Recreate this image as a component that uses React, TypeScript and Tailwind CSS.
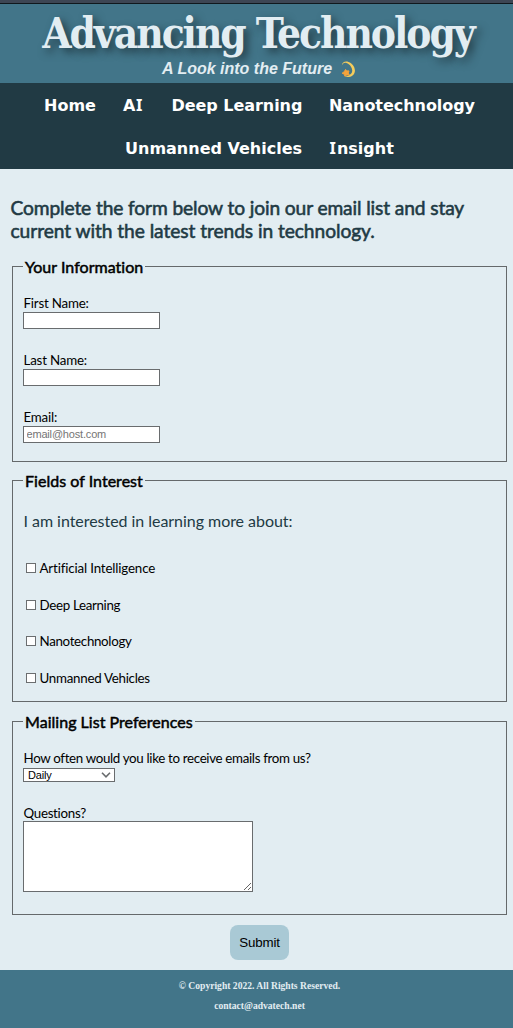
import React from "react";

function TextField({ label, id, placeholder }: { label: string; id: string; placeholder?: string }) {
  return (
    <div className="flex h-[57px] flex-col items-start">
      <label htmlFor={id} className="h-[17px] pl-[0.5px] text-[13.33px] leading-4 tracking-[-0.2px] whitespace-nowrap">{label}</label>
      <input
        id={id}
        placeholder={placeholder}
        className="h-[17px] w-[137px] border border-[#696c6e] bg-white px-[2.5px] pb-[2px] font-['Liberation_Sans',sans-serif] text-[11px] leading-[13px] tracking-[-0.18px] placeholder:text-[#757575]"
      />
    </div>
  );
}

function Interest({ label, tracking }: { label: string; tracking: string }) {
  return (
    <label className="flex h-[36.7px] items-start text-[13.33px] leading-4">
      <input type="checkbox" className="mt-[3px] mr-[3.5px] ml-[3px] h-[10px] w-[10px] appearance-none border border-[#6b6e70] bg-white" />
      <span className={`whitespace-nowrap ${tracking}`}>{label}</span>
    </label>
  );
}

function Legend({ children }: { children: string }) {
  return (
    <legend className="h-[19px] px-[2px] text-[16px] leading-[20px] font-normal tracking-[0.03px] whitespace-nowrap [-webkit-text-stroke:0.5px_black] [font-variant-ligatures:none]">
      {children}
    </legend>
  );
}

function SerifI() {
  return <span className="mr-[1px] ml-[0.5px] font-['Noto_Sans',sans-serif] text-[16.4px] leading-none">I</span>;
}

export default function App() {
  return (
    <div className="flex h-[1028px] w-[513px] flex-col bg-[#e2edf2] font-['Lato',sans-serif] text-black">
      <div className="h-[4px] shrink-0 border-b border-[#10181d] bg-[#3d4654]" />
      <header className="flex h-[79px] shrink-0 flex-col items-center bg-[#427589] text-[#e2edf2]">
        <h1 className="h-[55px] pl-[3px] font-['DejaVu_Serif_Condensed','DejaVu_Serif',serif] text-[42px] leading-[60px] font-bold tracking-[-2.05px] whitespace-nowrap [text-shadow:4px_4px_8px_#213a44]">
          Advancing Technology
        </h1>
        <p className="ml-[5px] flex h-5 items-center gap-[9px] font-['Liberation_Sans',sans-serif] text-[16px] leading-5 font-bold whitespace-nowrap italic">
          A Look into the Future
          <svg width="15" height="17" viewBox="0 0 15 17" fill="none">
            <path d="M.8 4.500C1.200 1.200 4-.2 7.500.9c3.800 1.200 6.800 5.400 6.400 9.300-.5 4.500-5.200 6.900-10.400 5.300 4.200-.2 7.400-2.100 7.700-5.400.3-3.300-2.300-7-5.700-8.200C3.200 1.200 1.700 2.400.8 4.500Z" fill="#f4cc5c" />
            <path d="m4.600 8.400 1 1.500 2.400 0-.7 2 1 2.200-2.400-.2-2 1.300-.6-2L1.100 12.200l2-1.300Z" fill="#f5a33b" stroke="#f5a33b" strokeWidth="1" strokeLinejoin="round" />
          </svg>
        </p>
      </header>
      <nav className="flex h-[86px] shrink-0 flex-col bg-[#213a44] font-['DejaVu_Sans',sans-serif] text-[16px] font-bold text-white">
        <div className="ml-[44px] flex h-[43px] items-baseline pt-[11px] leading-6 whitespace-nowrap">
          <a className="w-[79px]">Home</a>
          <a className="w-[48.5px]">A<SerifI /></a>
          <a className="w-[157.5px] tracking-[-0.05px]">Deep Learning</a>
          <a className="tracking-[-0.05px]">Nanotechnology</a>
        </div>
        <div className="ml-[125px] flex h-[43px] items-baseline pt-[11px] leading-6 whitespace-nowrap">
          <a className="w-[204px]">Unmanned Vehicles</a>
          <a><SerifI />nsight</a>
        </div>
      </nav>
      <main className="flex h-[801px] shrink-0 flex-col">
        <h2 className="mt-[27px] ml-[10.5px] h-[61px] text-[19.2px] leading-[23px] tracking-[-0.12px] whitespace-nowrap text-[#213a44] [-webkit-text-stroke:0.55px_#213a44]">
          Complete the form below to join our email list and stay
          <br />
          <span className="tracking-[-0.07px]">current with the latest trends in technology.</span>
        </h2>
        <form className="ml-[12px] flex w-[495px] flex-col">
          <fieldset className="h-[205px] border border-[#65696b] px-[10px]">
            <Legend>Your Information</Legend>
            <div className="pt-[19px]">
              <TextField id="first" label="First Name:" />
              <TextField id="last" label="Last Name:" />
              <TextField id="email" label="Email:" placeholder="email@host.com" />
            </div>
          </fieldset>
          <fieldset className="mt-[9px] h-[231px] border border-[#65696b] px-[10px]">
            <Legend>Fields of Interest</Legend>
            <p className="mt-[21px] mb-[29px] h-5 pl-[0.5px] text-[16px] leading-5 tracking-[-0.04px] whitespace-nowrap text-[#213a44]">
              I am interested in learning more about:
            </p>
            <Interest label="Artificial Intelligence" tracking="tracking-[-0.16px]" />
            <Interest label="Deep Learning" tracking="tracking-[-0.32px]" />
            <Interest label="Nanotechnology" tracking="tracking-[-0.32px]" />
            <Interest label="Unmanned Vehicles" tracking="tracking-[-0.27px]" />
          </fieldset>
          <fieldset className="mt-[10px] h-[203px] border border-[#65696b] px-[10px]">
            <Legend>Mailing List Preferences</Legend>
            <div className="flex flex-col items-start pt-[19px]">
              <label className="h-[18px] pl-[0.5px] text-[13.33px] leading-4 tracking-[-0.33px] whitespace-nowrap">How often would you like to receive emails from us?</label>
              <button type="button" className="flex h-[14px] w-[92px] items-center justify-between border border-[#696c6e] bg-white pr-[3px] pl-[4px] font-['Liberation_Sans',sans-serif] text-[11px] leading-3 tracking-[-0.2px]">
                Daily
                <svg width="10" height="6" viewBox="0 0 10 6" fill="none" stroke="#696c6e" strokeWidth="1.6">
                  <path d="m1 .8 4 4 4-4" />
                </svg>
              </button>
              <label htmlFor="questions" className="mt-[23px] h-4 pl-[0.5px] text-[13.33px] leading-4 tracking-[-0.3px]">Questions?</label>
              <textarea id="questions" className="h-[71px] w-[230px] border border-[#696c6e] bg-white" />
            </div>
          </fieldset>
          <button type="button" className="mt-[10px] ml-[218px] h-[35px] w-[59px] rounded-[8px] bg-[#a9c9d5] font-['Liberation_Sans',sans-serif] text-[13.33px] tracking-[-0.2px]">
            Submit
          </button>
        </form>
      </main>
      <footer className="flex h-[58px] shrink-0 flex-col items-center bg-[#427589] pt-[6px] pl-[6px] font-['Liberation_Serif',serif] text-[9.6px] leading-5 font-bold text-[#e2edf2]">
        <p>© Copyright 2022. All Rights Reserved.</p>
        <p>contact@advatech.net</p>
      </footer>
    </div>
  );
}
